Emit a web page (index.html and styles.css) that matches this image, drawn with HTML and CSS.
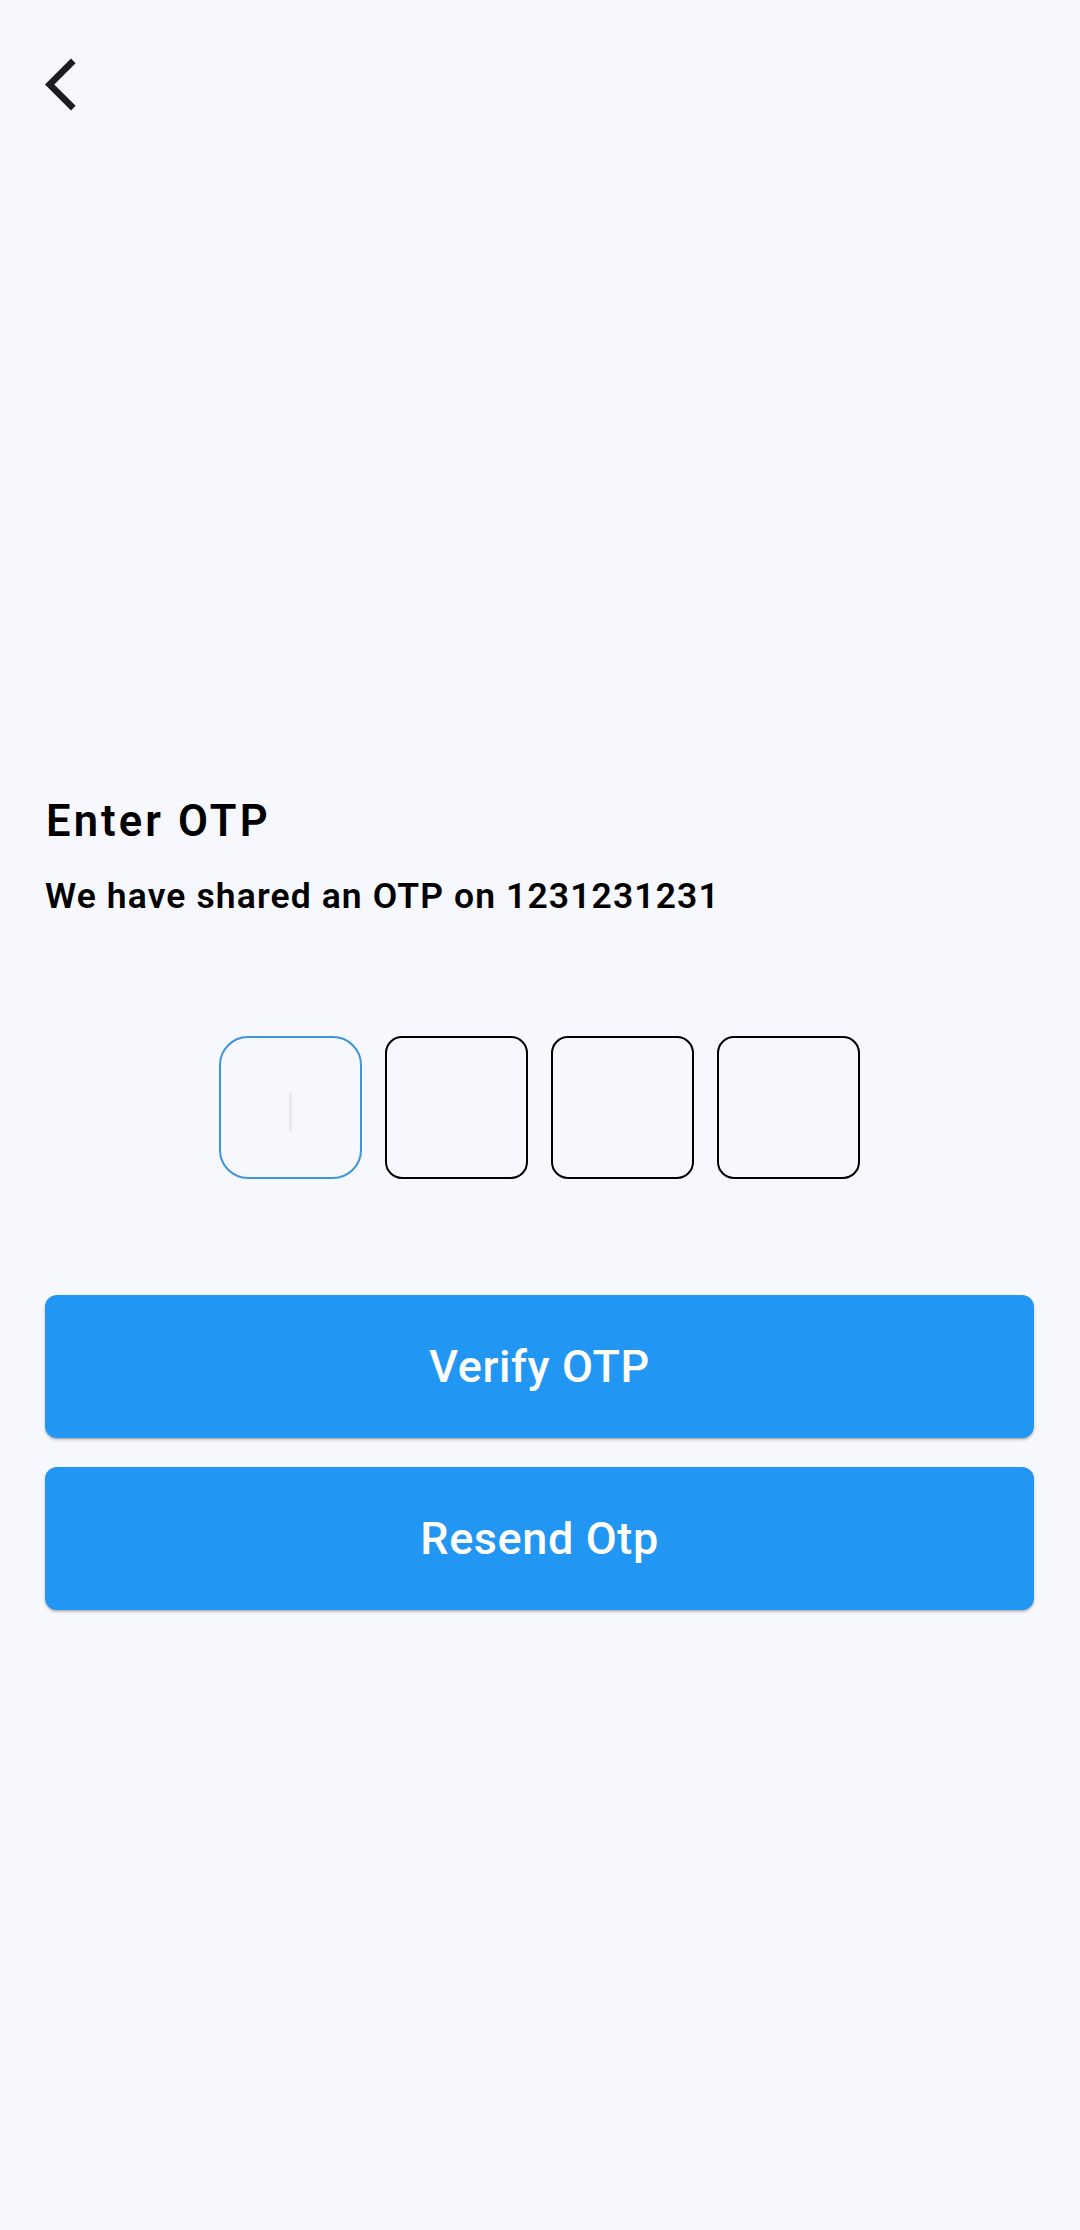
FILE: index.html
```html
<!DOCTYPE html>
<html lang="en">
<head>
<meta charset="utf-8">
<title>Enter OTP</title>
<link rel="stylesheet" href="styles.css">
</head>
<body>
<div class="page">
  <header class="topbar">
    <button class="back" aria-label="Back">
      <svg class="back-icon" viewBox="0 0 24 24" width="63" height="63"><path d="M11.67 3.87L9.9 2.1 0 12l9.9 9.9 1.77-1.77L3.54 12z" fill="#1c1c21"/></svg>
    </button>
  </header>
  <main class="content">
    <h1 class="title">Enter OTP</h1>
    <p class="subtitle">We have shared an OTP on 1231231231</p>
    <div class="otp-row">
      <div class="otp-box active"><span class="caret"></span></div>
      <div class="otp-box"></div>
      <div class="otp-box"></div>
      <div class="otp-box"></div>
    </div>
    <div class="actions">
      <button class="btn">Verify OTP</button>
      <button class="btn">Resend Otp</button>
    </div>
  </main>
</div>
</body>
</html>
```
FILE: styles.css
```css
* { box-sizing: border-box; }
html, body {
  margin: 0;
  padding: 0;
  background: #f7f8fd;
}
body {
  width: 1080px;
  height: 2230px;
  font-family: Roboto, "Noto Sans", sans-serif;
  color: #000;
}
.page {
  display: flex;
  flex-direction: column;
}
.topbar {
  padding-top: 53px;
  padding-left: 45px;
  height: 116px;
}
.back {
  display: block;
  border: 0;
  padding: 0;
  margin: 0;
  background: none;
  width: 63px;
  height: 63px;
}
.back-icon { display: block; }
.content {
  display: flex;
  flex-direction: column;
  padding: 0 46px 0 45px;
}
.title {
  margin: 680.4px 0 0 0;
  font-size: 43.5px;
  line-height: 52px;
  font-weight: 600;
  letter-spacing: 3.1px;
  padding-left: 1px;
}
.subtitle {
  margin: 26.5px 0 0 0;
  font-size: 35.5px;
  line-height: 42px;
  font-weight: 600;
  letter-spacing: 1.1px;
  padding-left: 0;
}
.otp-row {
  margin-top: 119.6px;
  display: flex;
  justify-content: center;
  gap: 23px;
}
.otp-box {
  width: 143px;
  height: 143px;
  border: 2.7px solid #000;
  border-radius: 17px;
  display: flex;
  align-items: center;
  justify-content: center;
}
.otp-box.active {
  border-color: #3f95dc;
  border-radius: 29px;
}
.caret {
  display: block;
  width: 3.5px;
  height: 39px;
  background: #e8e9ee;
  margin-top: 7px;
}
.actions {
  margin-top: 115.5px;
  display: flex;
  flex-direction: column;
  gap: 29px;
}
.btn {
  height: 143px;
  width: 100%;
  border: 0;
  border-radius: 12px;
  background: #2196f3;
  color: #fff;
  font-family: Roboto, "Noto Sans", sans-serif;
  font-size: 45px;
  font-weight: 500;
  letter-spacing: 0.6px;
  box-shadow: 0 2px 3px rgba(0, 0, 0, 0.22), 0 1px 1px rgba(0, 0, 0, 0.1);
  padding: 0;
}
```
